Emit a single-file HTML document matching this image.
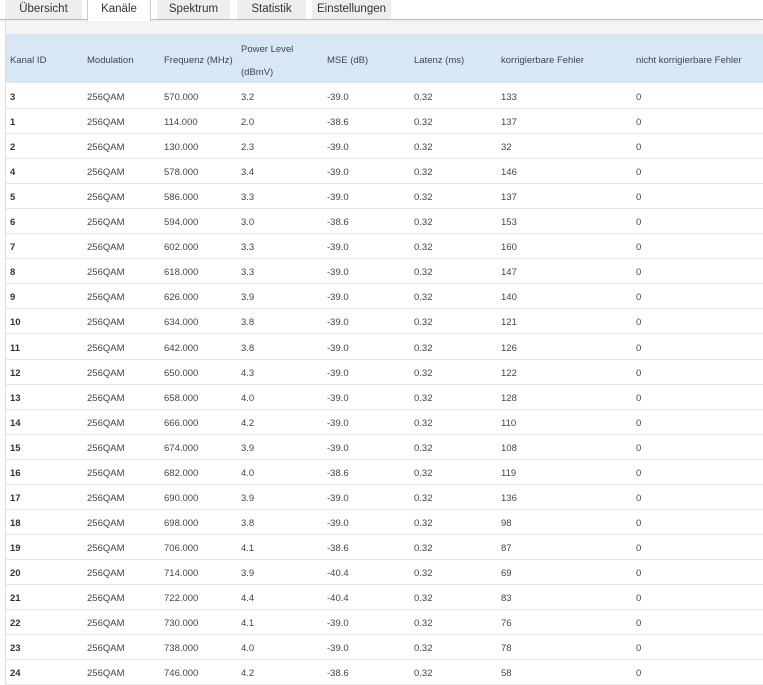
<!DOCTYPE html><html><head><style>
body{margin:0;width:763px;height:685px;overflow:hidden;background:#fff;font-family:"Liberation Sans",sans-serif;position:relative}
.tab{position:absolute;top:0;height:19px;background:#eeeeee;color:#333;font-size:11.5px;text-align:center;line-height:18px}
.act{background:#fff;border:1px solid #ccc;border-top:none;border-bottom:none;height:21px;z-index:2}
.line{position:absolute;top:19px;left:0;width:763px;height:1px;background:#bbb;box-shadow:0 1px 2px #ccc}
.vl{position:absolute;left:5px;top:20px;width:1px;height:665px;background:#ddd}
.band{position:absolute;left:6px;top:22px;width:757px;height:12px;background:#f4f4f4}
.hdr{position:absolute;left:6px;top:34px;width:757px;height:49px;background:#d7e7f5}
.c{position:absolute;font-size:9.5px;color:#444;white-space:nowrap}
.row{position:absolute;left:6px;width:757px;height:25px;border-bottom:1px solid #e6e6e6;box-sizing:border-box}
</style></head><body>
<div class="tab" style="left:5px;width:77px">Übersicht</div>
<div class="tab act" style="left:87px;width:62px">Kanäle</div>
<div class="tab" style="left:157px;width:73px">Spektrum</div>
<div class="tab" style="left:237px;width:69px">Statistik</div>
<div class="tab" style="left:312px;width:79px">Einstellungen</div>
<div class="line"></div><div class="vl"></div><div class="band"></div><div class="hdr"></div>
<div class="c" style="left:10px;top:55px">Kanal ID</div>
<div class="c" style="left:87px;top:55px">Modulation</div>
<div class="c" style="left:164px;top:55px">Frequenz (MHz)</div>
<div class="c" style="left:241px;top:44px">Power Level</div>
<div class="c" style="left:241px;top:67px">(dBmV)</div>
<div class="c" style="left:327px;top:55px">MSE (dB)</div>
<div class="c" style="left:414px;top:55px">Latenz (ms)</div>
<div class="c" style="left:501px;top:55px">korrigierbare Fehler</div>
<div class="c" style="left:636px;top:55px">nicht korrigierbare Fehler</div>
<div id="rows"></div>
<script>
var d=[[3,570,3.2,"-39.0",133],[1,114,"2.0","-38.6",137],[2,130,2.3,"-39.0",32],[4,578,3.4,"-39.0",146],[5,586,3.3,"-39.0",137],[6,594,"3.0","-38.6",153],[7,602,3.3,"-39.0",160],[8,618,3.3,"-39.0",147],[9,626,3.9,"-39.0",140],[10,634,3.8,"-39.0",121],[11,642,3.8,"-39.0",126],[12,650,4.3,"-39.0",122],[13,658,"4.0","-39.0",128],[14,666,4.2,"-39.0",110],[15,674,3.9,"-39.0",108],[16,682,"4.0","-38.6",119],[17,690,3.9,"-39.0",136],[18,698,3.8,"-39.0",98],[19,706,4.1,"-38.6",87],[20,714,3.9,"-40.4",69],[21,722,4.4,"-40.4",83],[22,730,4.1,"-39.0",76],[23,738,"4.0","-39.0",78],[24,746,4.2,"-38.6",58]];
var h="";d.forEach(function(r,i){var y=84+i*25.05;h+='<div class="row" style="top:'+y+'px"></div>';var t=y+8;
var v=[r[0],"256QAM",r[1]+".000",r[2],r[3],"0.32",r[4],"0"],x=[10,87,164,241,327,414,501,636];
v.forEach(function(s,j){h+='<div class="c" style="left:'+x[j]+'px;top:'+t+'px'+(j==0?';font-weight:bold;color:#333':'')+'">'+s+'</div>'});});
document.getElementById("rows").innerHTML=h;
</script>
</body></html>
